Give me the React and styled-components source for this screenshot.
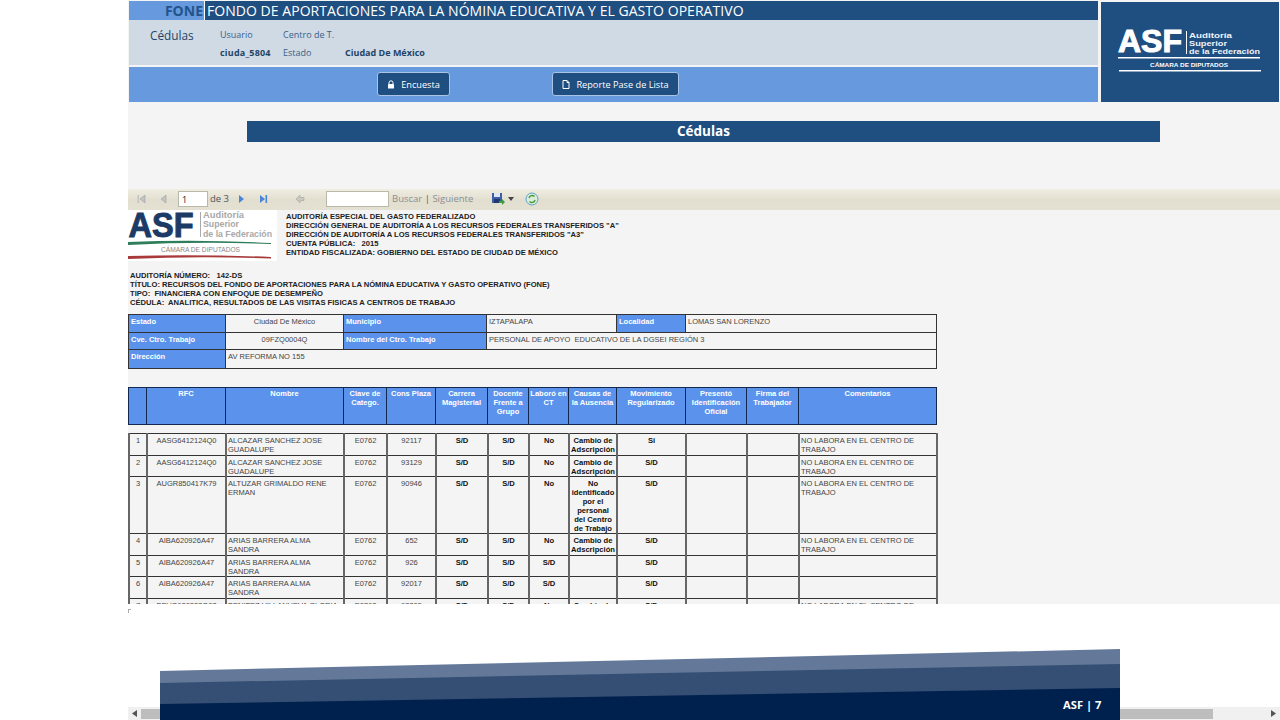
import React from "react";
import styled, { createGlobalStyle } from "styled-components";

const GlobalStyle = createGlobalStyle`
    html, body {
        margin: 0;
        padding: 0;
        width: 1280px;
        height: 720px;
        overflow: hidden;
        background: #fff;
        font-family: "Open Sans", "Liberation Sans", sans-serif;
    }
    * { box-sizing: border-box; }
`;

const Page = styled.div`
    position: relative;
    width: 1280px;
    height: 720px;
    padding-left: 128px;
    background: #fff;
`;
const Slide = styled.div`
    height: 604px;
    background: #f4f4f4;
    overflow: hidden;
`;

/* header */
const Header = styled.div`
    display: grid;
    grid-template-columns: 969px 178px;
    column-gap: 3px;
    padding: 1px 1px 0 1px;
    height: 102px;
`;
const HeaderLeft = styled.div`
    display: flex;
    flex-direction: column;
`;
const TitleRow = styled.div`
    display: flex;
    height: 19px;
`;
const Fone = styled.div`
    width: 76px;
    padding-right: 1px;
    background: #6699dd;
    color: #22548c;
    font-weight: 700;
    font-size: 14px;
    line-height: 19px;
    text-align: right;
    border-right: 1px solid #fff;
`;
const TitleText = styled.div`
    flex: 1;
    background: #1f4e80;
    color: #fff;
    font-size: 14px;
    letter-spacing: 0.045px;
    line-height: 19px;
    padding-left: 2px;
    white-space: nowrap;
`;
const InfoRow = styled.div`
    display: flex;
    height: 45px;
    background: #cfdae5;
    color: #3b5f88;
    font-size: 9px;
`;
const InfoTitle = styled.div`
    width: 91px;
    padding: 7px 0 0 21px;
    font-size: 11.8px;
    color: #1f4468;
`;
const InfoGrid = styled.div`
    display: grid;
    grid-template-columns: 63px 62px auto;
    grid-auto-rows: 18px;
    padding-top: 6px;
    line-height: 18px;
`;
const Strong = styled.div`
    font-weight: 700;
    color: #1f4468;
`;
const UserName = styled(Strong)`
    letter-spacing: 0.2px;
`;
const ActionRow = styled.div`
    display: flex;
    height: 35px;
    margin-top: 2px;
    padding: 5px 0 0 248px;
    background: #6699dd;
`;
const ActionButton = styled.div`
    display: flex;
    align-items: center;
    justify-content: center;
    gap: 6px;
    width: ${(props) => props.width};
    margin-right: ${(props) => props.gap || "0"};
    height: 24px;
    background: #1f4e80;
    border: 1px solid #a9c4e6;
    border-radius: 3px;
    color: #fff;
    font-size: 9.2px;
`;
const LogoBox = styled.div`
    height: 100px;
    margin-top: 1px;
    background: #1f4e80;
`;

const Heading = styled.div`
    width: 913px;
    height: 21px;
    margin: 19px 0 47px 119px;
    background: #1f4e80;
    color: #fff;
    font-weight: 700;
    font-size: 13.5px;
    line-height: 21px;
    text-align: center;
`;

/* report viewer toolbar */
const Toolbar = styled.div`
    display: flex;
    align-items: center;
    height: 21px;
    padding: 0 0 2px 9px;
    background: linear-gradient(#f0ede2, #e3dfd0 50%, #e4e0d2);
    color: #5c6670;
    font-size: 9.5px;
`;
const ToolIcon = styled.svg`
    flex: none;
    margin-right: ${(props) => props.gap || "0"};
`;
const PageInput = styled.div`
    width: 30px;
    height: 16px;
    margin-right: 2px;
    padding-left: 3px;
    background: #fff;
    border: 1px solid #b9b9a9;
    color: #222;
    font-size: 9px;
    line-height: 15px;
`;
const SearchInput = styled.div`
    width: 63px;
    height: 16px;
    margin-right: 3px;
    background: #fff;
    border: 1px solid #b9b9a9;
`;
const ToolText = styled.span`
    color: ${(props) => props.color || "#8a8f94"};
    margin-right: ${(props) => props.gap || "0"};
    white-space: nowrap;
`;

/* report body */
const Report = styled.div`
    height: 394px;
    overflow: hidden;
    font-family: "Liberation Sans", Arial, sans-serif;
`;
const ReportTop = styled.div`
    display: flex;
    height: 51px;
`;
const ReportLogo = styled.div`
    width: 149px;
    height: 51px;
    margin-right: 9px;
    background: #fff;
`;
const ReportLines = styled.div`
    padding-top: 2px;
`;
const BoldLine = styled.div`
    font-weight: 700;
    font-size: 7.6px;
    line-height: 9px;
    height: 9px;
    color: #222;
    white-space: nowrap;
`;
const AuditBlock = styled.div`
    padding: 10px 0 0 2px;
    height: 53px;
`;

const Table = styled.table`
    width: 808px;
    table-layout: fixed;
    border-collapse: collapse;
    margin-bottom: ${(props) => props.mb || "0"};
    font-size: 7.5px;
    line-height: 9px;
    color: #333;
`;
const Cell = styled.td`
    border: 1px solid #333;
    padding: 2px 2px 0;
    vertical-align: top;
    text-align: ${(props) => (props.center ? "center" : "left")};
    font-weight: ${(props) => (props.bold ? 700 : 400)};
    color: ${(props) => (props.bold ? "#111" : "#444")};
`;
const DataCell = styled(Cell)`
    border-left: 2px solid #666;
    border-right: 2px solid #666;
    padding: 2px 1px 0;
    font-size: ${(props) => (props.bold ? "7.6px" : "7.5px")};
`;
const LabelCell = styled.td`
    border: 1px solid #333;
    padding: 2px 2px 0;
    vertical-align: top;
    background: #5b93ec;
    color: #fff;
    font-weight: 700;
`;
const HeadCell = styled.th`
    border: 1px solid #12294d;
    padding: 1px;
    vertical-align: top;
    background: #5b93ec;
    color: #fff;
    font-weight: 700;
    text-align: center;
`;
const Row = styled.tr`
    height: ${(props) => props.h}px;
`;

const StrayMark = styled.div`
    width: 3px;
    height: 4px;
    margin-top: 5px;
    border-top: 1px solid #aaa;
    border-left: 1px solid #aaa;
`;

/* bottom scrollbar */
const ScrollBar = styled.div`
    display: flex;
    align-items: center;
    height: 13px;
    margin-top: 94px;
    background: #f0f0f0;
    color: #555;
`;
const ScrollArrow = styled.div`
    width: 13px;
    height: 13px;
    display: flex;
    align-items: center;
    justify-content: center;
    flex: none;
    margin-left: ${(props) => props.ml || "0"};
`;
const ScrollThumb = styled.div`
    width: 1072px;
    height: 10px;
    background: #bdbdbd;
`;

/* footer band lying over the scrollbar */
const Band = styled.svg`
    position: absolute;
    left: 160px;
    top: 649px;
`;
const PageNumber = styled.div`
    position: absolute;
    left: 1063px;
    top: 697px;
    color: #fff;
    font-weight: 700;
    font-size: 11.2px;
    line-height: 16px;
`;

const COLS1 = [97, 118, 143, 130, 69, 251];
const COLS2 = [18, 79, 118, 43, 49, 52, 41, 40, 48, 69, 61, 52, 138];

const HEADS = ["", "RFC", "Nombre", "Clave de Catego.", "Cons Plaza", "Carrera Magisterial", "Docente Frente a Grupo", "Laboró en CT", "Causas de la Ausencia", "Movimiento Regularizado", "Presentó Identificación Oficial", "Firma del Trabajador", "Comentarios"];

const NOLAB = "NO LABORA EN EL CENTRO DE TRABAJO";
const CAMBIO = "Cambio de Adscripción";
const ROWS = [
    { h: 22, n: 1, rfc: "AASG6412124Q0", name: "ALCAZAR SANCHEZ JOSE GUADALUPE", plaza: "92117", lab: "No", causa: CAMBIO, mov: "Si", com: NOLAB },
    { h: 21, n: 2, rfc: "AASG6412124Q0", name: "ALCAZAR SANCHEZ JOSE GUADALUPE", plaza: "93129", lab: "No", causa: CAMBIO, mov: "S/D", com: NOLAB },
    { h: 57, n: 3, rfc: "AUGR850417K79", name: "ALTUZAR GRIMALDO RENE ERMAN", plaza: "90946", lab: "No", causa: "No identificado por el personal del Centro de Trabajo", mov: "S/D", com: NOLAB },
    { h: 22, n: 4, rfc: "AIBA620926A47", name: "ARIAS BARRERA ALMA SANDRA", plaza: "652", lab: "No", causa: CAMBIO, mov: "S/D", com: NOLAB },
    { h: 21, n: 5, rfc: "AIBA620926A47", name: "ARIAS BARRERA ALMA SANDRA", plaza: "926", lab: "S/D", causa: "", mov: "S/D", com: "" },
    { h: 22, n: 6, rfc: "AIBA620926A47", name: "ARIAS BARRERA ALMA SANDRA", plaza: "92017", lab: "S/D", causa: "", mov: "S/D", com: "" },
    { h: 22, n: 7, rfc: "BEVG620222Q07", name: "BENITEZ VILLANUEVA GLORIA", plaza: "92205", lab: "No", causa: CAMBIO, mov: "S/D", com: NOLAB },
];

const ColGroup = ({ cols }) => (
    <colgroup>
        {cols.map((w, i) => <col key={i} style={{ width: w }} />)}
    </colgroup>
);

const Triangle = ({ dir, color, bar, gap }) => (
    <ToolIcon width="10" height="12" viewBox="0 0 10 12" gap={gap}>
        {dir === "left"
            ? <path d="M8 2 L3 6 L8 10 Z" fill={color} stroke="#8f9aa5" strokeWidth="0.5" />
            : <path d="M2 2 L7 6 L2 10 Z" fill={color} />}
        {bar && <rect x={dir === "left" ? 0.5 : 7.5} y="2" width="1.6" height="8" fill={color} />}
    </ToolIcon>
);

const HeaderLogo = () => (
    <svg width="178" height="100" viewBox="0 0 178 100">
        <text x="17" y="50" fontFamily="Liberation Sans" fontWeight="700" fontSize="31" fill="#fff" stroke="#fff" strokeWidth="1" textLength="64" lengthAdjust="spacingAndGlyphs">ASF</text>
        <rect x="85" y="29" width="1" height="23" fill="#fff" />
        <g fontFamily="Liberation Sans" fontWeight="700" fontSize="8" fill="#eef3f9">
            <text x="88" y="36" textLength="43" lengthAdjust="spacingAndGlyphs">Auditoría</text>
            <text x="88" y="44" textLength="38" lengthAdjust="spacingAndGlyphs">Superior</text>
            <text x="88" y="52" textLength="71" lengthAdjust="spacingAndGlyphs">de la Federación</text>
        </g>
        <rect x="17" y="55" width="142" height="1.500" fill="#fff" />
        <text x="49" y="65" fontFamily="Liberation Sans" fontWeight="700" fontSize="6" fill="#fff" textLength="78" lengthAdjust="spacingAndGlyphs">CÁMARA DE DIPUTADOS</text>
        <rect x="18" y="68" width="142" height="1.500" fill="#fff" />
    </svg>
);

const ReportLogoArt = () => (
    <svg width="149" height="51" viewBox="0 0 149 51">
        <text x="0.500" y="27" fontFamily="Liberation Sans" fontWeight="700" fontSize="35" fill="#1b3a66" stroke="#1b3a66" strokeWidth="1" textLength="65" lengthAdjust="spacingAndGlyphs">ASF</text>
        <rect x="72" y="2" width="1" height="25" fill="#aaa" />
        <g fontFamily="Liberation Sans" fontWeight="700" fontSize="8.5" fill="#a9a9a9">
            <text x="75" y="8" textLength="41" lengthAdjust="spacingAndGlyphs">Auditoría</text>
            <text x="75" y="17" textLength="36" lengthAdjust="spacingAndGlyphs">Superior</text>
            <text x="75" y="27" textLength="69" lengthAdjust="spacingAndGlyphs">de la Federación</text>
        </g>
        <path d="M0 32 Q70 29 143 33 L143 34 Q70 31 0 35 Z" fill="#2e7d5b" />
        <text x="33" y="42" fontFamily="Liberation Sans" fontSize="6.500" fill="#888" textLength="79" lengthAdjust="spacingAndGlyphs">CÁMARA DE DIPUTADOS</text>
        <path d="M0 46 Q70 44 143 47 L143 48.500 Q70 46 0 49 Z" fill="#a83a3a" />
    </svg>
);

const App = () => {
    return (
        <Page>
            <GlobalStyle />
            <Slide>
                <Header>
                    <HeaderLeft>
                        <TitleRow>
                            <Fone>FONE</Fone>
                            <TitleText>FONDO DE APORTACIONES PARA LA NÓMINA EDUCATIVA Y EL GASTO OPERATIVO</TitleText>
                        </TitleRow>
                        <InfoRow>
                            <InfoTitle>Cédulas</InfoTitle>
                            <InfoGrid>
                                <div>Usuario</div>
                                <div>Centro de T.</div>
                                <div></div>
                                <UserName>ciuda_5804</UserName>
                                <div>Estado</div>
                                <Strong>Ciudad De México</Strong>
                            </InfoGrid>
                        </InfoRow>
                        <ActionRow>
                            <ActionButton width="73px" gap="102px">
                                <svg width="8" height="9" viewBox="0 0 8 9">
                                    <path d="M2 4 V2.800 A2 2 0 0 1 6 2.800 V4" fill="none" stroke="#fff" />
                                    <rect x="1" y="4" width="6" height="4.500" rx="0.500" fill="#fff" />
                                </svg>
                                Encuesta
                            </ActionButton>
                            <ActionButton width="127px">
                                <svg width="8" height="9" viewBox="0 0 8 9">
                                    <path d="M1 .5 H5 L7 2.500 V8.500 H1 Z" fill="none" stroke="#fff" />
                                    <path d="M5 .5 V2.500 H7" fill="none" stroke="#fff" />
                                </svg>
                                Reporte Pase de Lista
                            </ActionButton>
                        </ActionRow>
                    </HeaderLeft>
                    <LogoBox><HeaderLogo /></LogoBox>
                </Header>

                <Heading>Cédulas</Heading>

                <Toolbar>
                    <Triangle dir="left" color="#c4c4c0" bar gap="11px" />
                    <Triangle dir="left" color="#c4c4c0" gap="10px" />
                    <PageInput>1</PageInput>
                    <ToolText color="#4b5560" gap="8px">de 3</ToolText>
                    <Triangle color="#4a86d8" gap="11px" />
                    <Triangle color="#4a86d8" bar gap="26px" />
                    <ToolIcon width="12" height="12" viewBox="0 0 12 12" gap="20px">
                        <path d="M6 2 L2 6 L6 10 V7.500 H10 V4.500 H6 Z" fill="#c9c9c2" stroke="#a5a59e" strokeWidth="0.600" />
                    </ToolIcon>
                    <SearchInput />
                    <ToolText>Buscar</ToolText>
                    <ToolText color="#4b5560">&nbsp;|&nbsp;</ToolText>
                    <ToolText gap="18px">Siguiente</ToolText>
                    <ToolIcon width="14" height="13" viewBox="0 0 14 13" gap="3px">
                        <rect x="1" y="1" width="10" height="10" fill="#3d5fa8" />
                        <rect x="3" y="1" width="6" height="4" fill="#dfe7f5" />
                        <rect x="3" y="7" width="6" height="4" fill="#22396e" />
                        <path d="M8 9 H11 V7 L14 10 L11 13 V11 H8 Z" fill="#3f9e3f" />
                    </ToolIcon>
                    <ToolIcon width="6" height="4" viewBox="0 0 6 4" gap="11px">
                        <path d="M0 0 H6 L3 4 Z" fill="#444" />
                    </ToolIcon>
                    <ToolIcon width="14" height="14" viewBox="0 0 14 14">
                        <circle cx="7" cy="7" r="6" fill="#dcebd8" stroke="#5fa3c7" />
                        <path d="M4 6 A3.200 3.200 0 0 1 9.500 4.500 M10 8 A3.200 3.200 0 0 1 4.500 9.500" fill="none" stroke="#3e9e45" strokeWidth="1.400" />
                    </ToolIcon>
                </Toolbar>

                <Report>
                    <ReportTop>
                        <ReportLogo><ReportLogoArt /></ReportLogo>
                        <ReportLines>
                            <BoldLine>AUDITORÍA ESPECIAL DEL GASTO FEDERALIZADO</BoldLine>
                            <BoldLine>DIRECCIÓN GENERAL DE AUDITORÍA A LOS RECURSOS FEDERALES TRANSFERIDOS "A"</BoldLine>
                            <BoldLine>DIRECCIÓN DE AUDITORÍA A LOS RECURSOS FEDERALES TRANSFERIDOS "A3"</BoldLine>
                            <BoldLine>CUENTA PÚBLICA:&nbsp;&nbsp; 2015</BoldLine>
                            <BoldLine>ENTIDAD FISCALIZADA: GOBIERNO DEL ESTADO DE CIUDAD DE MÉXICO</BoldLine>
                        </ReportLines>
                    </ReportTop>
                    <AuditBlock>
                        <BoldLine>AUDITORÍA NÚMERO:&nbsp;&nbsp; 142-DS</BoldLine>
                        <BoldLine>TÍTULO: RECURSOS DEL FONDO DE APORTACIONES PARA LA NÓMINA EDUCATIVA Y GASTO OPERATIVO (FONE)</BoldLine>
                        <BoldLine>TIPO:&nbsp; FINANCIERA CON ENFOQUE DE DESEMPEÑO</BoldLine>
                        <BoldLine>CÉDULA:&nbsp; ANALITICA, RESULTADOS DE LAS VISITAS FISICAS A CENTROS DE TRABAJO</BoldLine>
                    </AuditBlock>

                    <Table mb="18px">
                        <ColGroup cols={COLS1} />
                        <tbody>
                            <Row h={18}>
                                <LabelCell>Estado</LabelCell>
                                <Cell center>Ciudad De México</Cell>
                                <LabelCell>Municipio</LabelCell>
                                <Cell>IZTAPALAPA</Cell>
                                <LabelCell>Localidad</LabelCell>
                                <Cell>LOMAS SAN LORENZO</Cell>
                            </Row>
                            <Row h={17}>
                                <LabelCell>Cve. Ctro. Trabajo</LabelCell>
                                <Cell center>09FZQ0004Q</Cell>
                                <LabelCell>Nombre del Ctro. Trabajo</LabelCell>
                                <Cell colSpan={3}>PERSONAL DE APOYO&nbsp; EDUCATIVO DE LA DGSEI REGIÓN 3</Cell>
                            </Row>
                            <Row h={19}>
                                <LabelCell>Dirección</LabelCell>
                                <Cell colSpan={5}>AV REFORMA NO 155</Cell>
                            </Row>
                        </tbody>
                    </Table>

                    <Table mb="8px">
                        <ColGroup cols={COLS2} />
                        <thead>
                            <Row h={37}>
                                {HEADS.map((t, i) => <HeadCell key={i}>{t}</HeadCell>)}
                            </Row>
                        </thead>
                    </Table>

                    <Table>
                        <ColGroup cols={COLS2} />
                        <tbody>
                            {ROWS.map((r) => (
                                <Row h={r.h} key={r.n}>
                                    <DataCell center>{r.n}</DataCell>
                                    <DataCell center>{r.rfc}</DataCell>
                                    <DataCell>{r.name}</DataCell>
                                    <DataCell center>E0762</DataCell>
                                    <DataCell center>{r.plaza}</DataCell>
                                    <DataCell center bold>S/D</DataCell>
                                    <DataCell center bold>S/D</DataCell>
                                    <DataCell center bold>{r.lab}</DataCell>
                                    <DataCell center bold>{r.causa}</DataCell>
                                    <DataCell center bold>{r.mov}</DataCell>
                                    <DataCell></DataCell>
                                    <DataCell></DataCell>
                                    <DataCell>{r.com}</DataCell>
                                </Row>
                            ))}
                        </tbody>
                    </Table>
                </Report>
            </Slide>
            <StrayMark />
            <ScrollBar>
                <ScrollArrow>
                    <svg width="5" height="7" viewBox="0 0 5 7"><path d="M5 0 V7 L0 3.500 Z" fill="#555" /></svg>
                </ScrollArrow>
                <ScrollThumb />
                <ScrollArrow ml="auto">
                    <svg width="5" height="7" viewBox="0 0 5 7"><path d="M0 0 V7 L5 3.500 Z" fill="#555" /></svg>
                </ScrollArrow>
            </ScrollBar>
            <Band width="960" height="71" viewBox="0 0 960 71">
                <path d="M0 22 L960 0 V71 H0 Z" fill="#64799a" />
                <path d="M0 34 L960 15 V71 H0 Z" fill="#344f73" />
                <path d="M0 55 L960 39 V71 H0 Z" fill="#00204e" />
            </Band>
            <PageNumber>ASF | 7</PageNumber>
        </Page>
    );
};

export default App;
